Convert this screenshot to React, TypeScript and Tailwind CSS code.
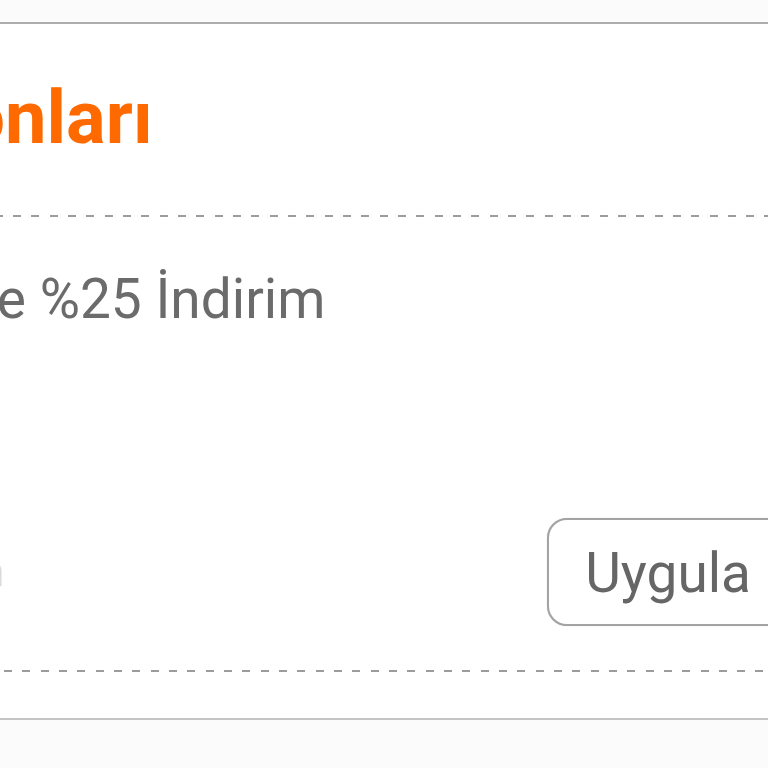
import clsx from 'clsx';

// Dotted separator between coupon sections
function Dashes({ shifted = false, className }: { shifted?: boolean; className?: string }) {
  return (
    <div
      className={clsx(
        'h-[2px] bg-[repeating-linear-gradient(to_right,#9c9c9c_0_8px,transparent_8px_18.33px)]',
        shifted && 'bg-[position:9px_0]',
        className
      )}
    />
  );
}

export default function App() {
  return (
    <div className="min-h-screen w-[768px] overflow-hidden bg-[#fbfbfb] pt-[22px] font-['Roboto',sans-serif]">
      <section className="-ml-[201px] -mr-[61px] border-t-2 border-b-2 border-t-[#adadad] border-b-[#c4c4c4] bg-white px-[40px] pt-[56px] pb-[46px]">
        <h2 className="-ml-[5px] whitespace-nowrap text-[74px] font-bold leading-[75px] text-[#ff6a00]">
          Kuponları
        </h2>

        <Dashes shifted className="mt-[60px]" />

        <p className="mt-[54px] whitespace-nowrap text-[55px] leading-[57px] text-[#6b6b6b]">
          Sepette %25 İndirim
        </p>

        <div className="mt-[190px] flex items-center justify-between gap-4">
          <input
            placeholder="Kod girin"
            className="min-w-0 flex-1 bg-transparent text-[42px] leading-[48px] text-[#6b6b6b] outline-none placeholder:text-[#dadada]"
          />
          <button className="shrink-0 rounded-[20px] border-2 border-[#a3a3a3] bg-white px-[36px] pt-[25px] pb-[23px] text-[55px] leading-[56px] text-[#666666] shadow-[0_0_1px_rgba(0,0,0,0.25)]">
            Uygula
          </button>
        </div>

        <Dashes className="mt-[44px]" />
      </section>
    </div>
  );
}
